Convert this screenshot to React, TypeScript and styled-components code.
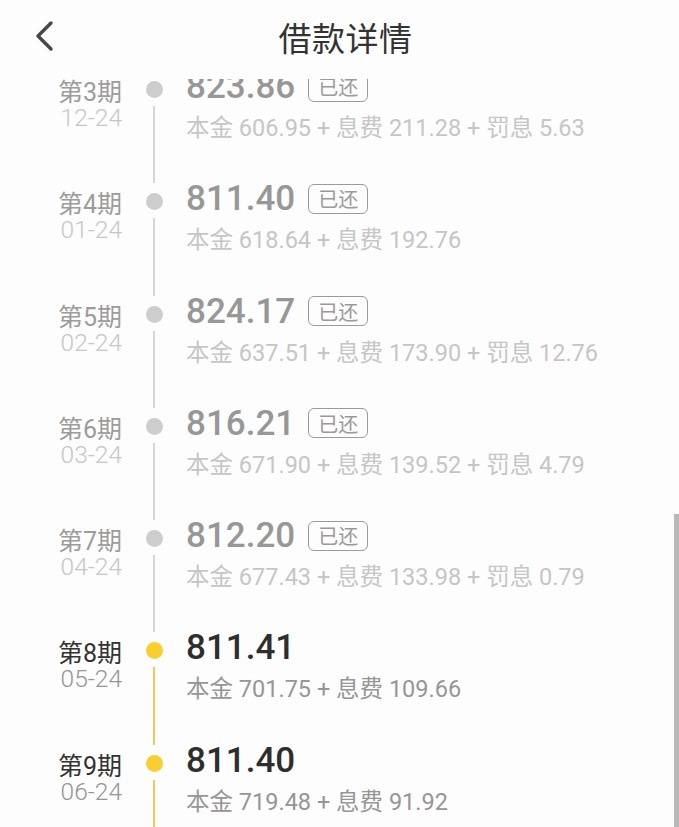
import React from "react"
import styled, { createGlobalStyle } from "styled-components"

type Period = {
  no: number
  date: string
  amount: string
  principal: string
  fee: string
  penalty?: string
  paid: boolean
}

const periods: Period[] = [
  { no: 3, date: "12-24", amount: "823.86", principal: "606.95", fee: "211.28", penalty: "5.63", paid: true },
  { no: 4, date: "01-24", amount: "811.40", principal: "618.64", fee: "192.76", paid: true },
  { no: 5, date: "02-24", amount: "824.17", principal: "637.51", fee: "173.90", penalty: "12.76", paid: true },
  { no: 6, date: "03-24", amount: "816.21", principal: "671.90", fee: "139.52", penalty: "4.79", paid: true },
  { no: 7, date: "04-24", amount: "812.20", principal: "677.43", fee: "133.98", penalty: "0.79", paid: true },
  { no: 8, date: "05-24", amount: "811.41", principal: "701.75", fee: "109.66", paid: false },
  { no: 9, date: "06-24", amount: "811.40", principal: "719.48", fee: "91.92", paid: false },
]

const App: React.FC = () => {
  return (
    <Page>
      <GlobalStyle />
      <Header>
        <BackButton aria-label="back">
          <svg width="20" height="32" viewBox="0 0 20 32" fill="none">
            <polyline
              points="17,3 4,16 17,29"
              stroke="#474747"
              strokeWidth="3.4"
              strokeLinecap="round"
              strokeLinejoin="round"
            />
          </svg>
        </BackButton>
        <Title>借款详情</Title>
        <span />
      </Header>
      <Viewport>
        <List>
          {periods.map(item => (
            <Row key={item.no}>
              <LabelCol>
                <PeriodLabel $paid={item.paid}>第{item.no}期</PeriodLabel>
                <DateLabel $paid={item.paid}>{item.date}</DateLabel>
              </LabelCol>
              <Rail>
                <Dot $paid={item.paid} />
                <RailLine $paid={item.paid} />
              </Rail>
              <Content>
                <AmountLine>
                  <Amount $paid={item.paid}>{item.amount}</Amount>
                  {item.paid && <Tag>已还</Tag>}
                </AmountLine>
                <Details $paid={item.paid}>
                  本金 {item.principal} + 息费 {item.fee}
                  {item.penalty && ` + 罚息 ${item.penalty}`}
                </Details>
              </Content>
            </Row>
          ))}
        </List>
      </Viewport>
      <ScrollThumb />
    </Page>
  )
}

const GlobalStyle = createGlobalStyle`
  html, body {
    margin: 0;
    padding: 0;
    background: #fdfdfd;
  }
  body {
    font-family: Roboto, "Noto Sans CJK SC", "Noto Sans", sans-serif;
  }
  * {
    box-sizing: border-box;
  }
`

const Page = styled.div`
  position: relative;
  height: 100vh;
  display: flex;
  flex-direction: column;
  overflow: hidden;
  background: #fdfdfd;
`

const Header = styled.header`
  height: 79px;
  padding-bottom: 4px;
  flex-shrink: 0;
  display: grid;
  grid-template-columns: 1fr auto 1fr;
  align-items: center;
  background: #fdfdfd;
`

const BackButton = styled.button`
  justify-self: start;
  margin-left: 34px;
  margin-top: -3px;
  padding: 0;
  border: none;
  background: none;
  display: flex;
`

const Title = styled.h1`
  margin: 0;
  margin-top: -1px;
  margin-left: 12px;
  font-size: 33px;
  font-weight: 400;
  color: #333;
  letter-spacing: 0.5px;
`

const Viewport = styled.div`
  flex: 1;
  overflow: hidden;
`

const List = styled.div`
  margin-top: -8px;
`

const Row = styled.div`
  display: grid;
  grid-template-columns: 122px 64px 1fr;
  height: 112.3px;
`

const LabelCol = styled.div`
  display: flex;
  flex-direction: column;
  align-items: flex-end;
  padding-top: 10px;
`

const PeriodLabel = styled.div<{ $paid: boolean }>`
  font-size: 25px;
  line-height: 24px;
  color: ${props => (props.$paid ? "#9c9c9c" : "#333")};
`

const DateLabel = styled.div<{ $paid: boolean }>`
  font-size: 24.5px;
  line-height: 24px;
  margin-top: 1px;
  font-weight: 300;
  color: ${props => (props.$paid ? "#c6c6c6" : "#959595")};
`

const Rail = styled.div`
  display: flex;
  flex-direction: column;
  align-items: center;
  padding-top: 10px;
`

const Dot = styled.div<{ $paid: boolean }>`
  width: 17px;
  height: 17px;
  border-radius: 50%;
  flex-shrink: 0;
  background: ${props => (props.$paid ? "#cdcdcd" : "#f8cf2f")};
`

const RailLine = styled.div<{ $paid: boolean }>`
  width: 2px;
  flex: 1;
  margin-top: 8px;
  background: ${props => (props.$paid ? "#d6d6d6" : "#efca55")};
`

const Content = styled.div`
  display: flex;
  flex-direction: column;
`

const AmountLine = styled.div`
  display: flex;
  align-items: center;
  height: 37px;
  margin-top: -3px;
`

const Amount = styled.span<{ $paid: boolean }>`
  font-size: 35px;
  line-height: 37px;
  font-weight: 500;
  color: ${props => (props.$paid ? "#979797" : "#2e2e2e")};
`

const Tag = styled.span`
  margin-left: 13px;
  height: 30px;
  padding: 0 9px;
  display: flex;
  align-items: center;
  border: 1.5px solid #9a9a9a;
  border-radius: 6px;
  font-size: 20px;
  color: #9a9a9a;
`

const Details = styled.div<{ $paid: boolean }>`
  margin-top: 8px;
  font-size: 23.5px;
  line-height: 30px;
  color: ${props => (props.$paid ? "#c6c6c6" : "#969696")};
`

const ScrollThumb = styled.div`
  position: absolute;
  right: 0;
  top: 514px;
  bottom: 0;
  width: 5px;
  background: #b9b9b9;
`

export default App
